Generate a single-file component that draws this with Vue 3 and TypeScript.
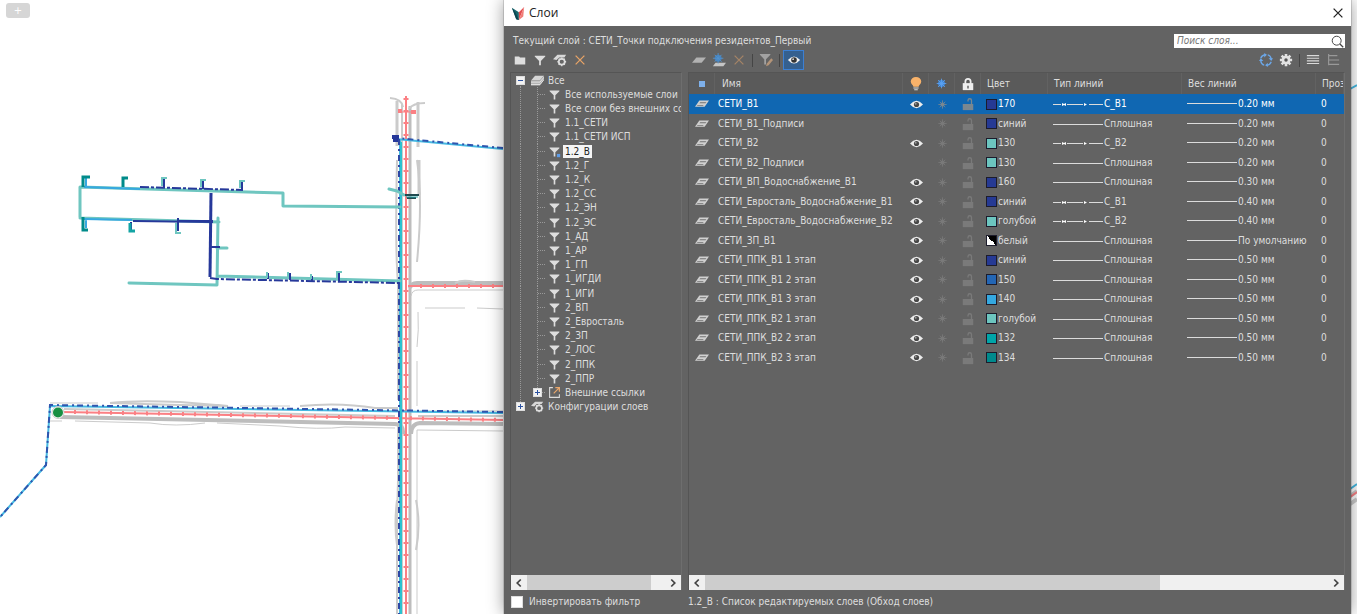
<script setup lang="ts">
import { computed, ref } from 'vue'

interface TreeNode {
  label: string
  level: 0 | 1
  icon: string
  box?: 'plus' | 'minus'
}

interface Layer {
  name: string
  visible: boolean
  color: string
  colorName: string
  lineType: string
  weight: string
}

const filters = [
  'Все используемые слои', 'Все слои без внешних ссылок', '1.1_СЕТИ', '1.1_СЕТИ ИСП', '1.2_В', '1.2_Г',
  '1.2_К', '1.2_СС', '1.2_ЭН', '1.2_ЭС', '1_АД', '1_АР', '1_ГП', '1_ИГДИ', '1_ИГИ', '2_ВП',
  '2_Евросталь', '2_ЗП', '2_ЛОС', '2_ППК', '2_ППР',
]

const nodes: TreeNode[] = [
  { label: 'Все', level: 0, icon: 'stack', box: 'minus' },
  ...filters.map((label): TreeNode => ({ label, level: 1, icon: label === '1.2_В' ? 'funnel-dot' : 'funnel' })),
  { label: 'Внешние ссылки', level: 1, icon: 'external', box: 'plus' },
  { label: 'Конфигурации слоев', level: 0, icon: 'config', box: 'plus' },
]

const layer = (name: string, visible: boolean, color: string, colorName: string, lineType: string, weight: string): Layer =>
  ({ name, visible, color, colorName, lineType, weight })

const layers: Layer[] = [
  layer('СЕТИ_В1', true, '#263a94', '170', 'С_В1', '0.20 мм'),
  layer('СЕТИ_В1_Подписи', false, '#263a94', 'синий', 'Сплошная', '0.20 мм'),
  layer('СЕТИ_В2', true, '#6cc5bf', '130', 'С_В2', '0.20 мм'),
  layer('СЕТИ_В2_Подписи', false, '#6cc5bf', '130', 'Сплошная', '0.20 мм'),
  layer('СЕТИ_ВП_Водоснабжение_В1', true, '#263a94', '160', 'Сплошная', '0.30 мм'),
  layer('СЕТИ_Евросталь_Водоснабжение_В1', true, '#263a94', 'синий', 'С_В1', '0.40 мм'),
  layer('СЕТИ_Евросталь_Водоснабжение_В2', true, '#6cc5bf', 'голубой', 'С_В2', '0.40 мм'),
  layer('СЕТИ_ЗП_В1', true, 'bw', 'белый', 'Сплошная', 'По умолчанию'),
  layer('СЕТИ_ППК_В1 1 этап', true, '#263a94', 'синий', 'Сплошная', '0.50 мм'),
  layer('СЕТИ_ППК_В1 2 этап', true, '#2366b4', '150', 'Сплошная', '0.50 мм'),
  layer('СЕТИ_ППК_В1 3 этап', true, '#34a8e0', '140', 'Сплошная', '0.50 мм'),
  layer('СЕТИ_ППК_В2 1 этап', true, '#6cc5bf', 'голубой', 'Сплошная', '0.50 мм'),
  layer('СЕТИ_ППК_В2 2 этап', true, '#00a5a8', '132', 'Сплошная', '0.50 мм'),
  layer('СЕТИ_ППК_В2 3 этап', true, '#008a8c', '134', 'Сплошная', '0.50 мм'),
]

const activeFilter = ref('1.2_В')
const activeLayer = ref('СЕТИ_В1')
const query = ref('')
const invert = ref(false)
const status = computed(() => `${activeFilter.value} : Список редактируемых слоев (Обход слоев)`)
</script>

<template>
  <main class="desktop">
    <svg class="symbols" aria-hidden="true">
      <symbol id="folder" viewBox="0 0 16 16"><path d="M2 4h5l1 1h6v8H2z" fill="#dedede" /></symbol>
      <symbol id="funnel" viewBox="0 0 16 16"><path d="M2 3h12v1L9 9v5H7V9L2 4z" fill="#dedede" /></symbol>
      <symbol id="funnel-dot" viewBox="0 0 16 16"><path d="M2 3h12v1L9 9v5H7V9L2 4z" fill="#dedede" /><path d="M11 11h4v4h-4z" fill="#5d9be6" /></symbol>
      <symbol id="config" viewBox="0 0 16 16">
        <path d="M0 7l5-5h10l-2 3H7L4 8z" fill="#d8d8d8" />
        <circle cx="10" cy="10" r="3.400" fill="none" stroke="#dedede" stroke-width="2" />
        <path d="M10 5v2M10 13v2M5 10h2M13 10h2M6.500 6.500l1 1M12.500 12.500l1 1M6.500 13.500l1-1M12.500 7.500l1-1" stroke="#dedede" stroke-width="1.500" />
        <circle cx="10" cy="10" r="1.500" fill="#686868" />
      </symbol>
      <symbol id="cross" viewBox="0 0 16 16"><path d="M3 3l10 10M13 3L3 13" stroke="currentColor" stroke-width="1.500" fill="none" /></symbol>
      <symbol id="sheet" viewBox="0 0 16 16"><path d="M5 5h11l-5 6H0z" fill="#b2b2b2" /></symbol>
      <symbol id="sheet-snow" viewBox="0 0 16 16">
        <path d="M4 11h12l-3 4H1z" fill="#c5c5c5" />
        <circle cx="7" cy="6" r="4" fill="#4181c0" />
        <path d="M7 0v12M1 6h12M3 2l8 8M11 2l-8 8" stroke="#5592cc" stroke-width="1" />
      </symbol>
      <symbol id="funnel-pen" viewBox="0 0 16 16"><path d="M1 1h12v1L8 7v6H6V7L1 2z" fill="#a2a2a2" /><path d="M8 15l1-3 5-6 2 2-5 6z" fill="#b49478" /></symbol>
      <symbol id="eye" viewBox="0 0 16 16">
        <path d="M0 8Q8-1 16 8Q8 17 0 8z" fill="#ececec" />
        <circle cx="8" cy="8" r="3.200" fill="#484848" /><circle cx="7" cy="7" r="1.200" fill="#999" />
      </symbol>
      <symbol id="eye-big" viewBox="0 0 16 16">
        <path d="M1 8Q8 0 15 8Q8 16 1 8z" fill="#f2f2f2" />
        <circle cx="8" cy="8" r="3.200" fill="#343434" /><circle cx="7" cy="7" r="1" fill="#ddd" />
      </symbol>
      <symbol id="refresh" viewBox="0 0 16 16">
        <path d="M14 10A6 6 0 0 1 9 14M6 14A6 6 0 0 1 2 9M2 6A6 6 0 0 1 7 2M10 2A6 6 0 0 1 14 7" fill="none" stroke="#6ca7e8" stroke-width="1.500" />
        <path d="M11 6h5l-2 3zM0 9h5L2 6zM6 0l3 2-3 3zM10 11v5l-3-2z" fill="#6ca7e8" />
      </symbol>
      <symbol id="gear" viewBox="0 0 16 16">
        <path d="M8 1v14M1 8h14M3 3l10 10M13 3L3 13" stroke="#e2e2e2" stroke-width="3" />
        <circle cx="8" cy="8" r="5" fill="#e2e2e2" /><circle cx="8" cy="8" r="2" fill="#555" />
      </symbol>
      <symbol id="rows" viewBox="0 0 16 16"><path d="M1 3h14M1 6h14M1 9h14M1 12h14" stroke="#dadada" stroke-width="1.300" /></symbol>
      <symbol id="outline" viewBox="0 0 16 16"><path d="M3 1v13M3 3h10M3 8h12M3 13h12" stroke="#999" stroke-width="1.300" fill="none" /></symbol>
      <symbol id="stack" viewBox="0 0 16 16">
        <path d="M5 2h11l-5 6H0z" fill="#d6d6d6" /><path d="M0 8h11l5-6v5l-5 7H0z" fill="#b4b4b4" /><path d="M0 10h11l5-6M0 13h11l5-6" fill="none" stroke="#ececec" />
      </symbol>
      <symbol id="external" viewBox="0 0 16 16">
        <path d="M6 2H2v12h12v-4M2 2v12" fill="none" stroke="#dedede" stroke-width="1.300" />
        <path d="M7 9l7-7M9 2h5v5" fill="none" stroke="#eaa76b" stroke-width="1.500" />
      </symbol>
      <symbol id="layer" viewBox="0 0 16 16"><path d="M5 4h11l-5 7H0z" fill="#d0d0d0" /><path d="M6 6h7l-1 1H5zM3 9h7l-1 1H2z" fill="#727272" /></symbol>
      <symbol id="snow" viewBox="0 0 16 16"><circle cx="8" cy="8" r="3" fill="currentColor" /><path d="M8 2v12M2 8h12M4 4l8 8M12 4l-8 8" stroke="currentColor" stroke-width="1.200" /></symbol>
      <symbol id="snow-head" viewBox="0 0 16 16"><circle cx="8" cy="8" r="5" fill="#3f88dc" /><path d="M8 1v14M1 8h14M3 3l10 10M13 3L3 13" stroke="#5ea3f0" stroke-width="1.200" /></symbol>
      <symbol id="lock" viewBox="0 0 16 16"><path d="M5 8V5a3 3 0 0 1 6 0v3" fill="none" stroke="#eee" stroke-width="2" /><path d="M2 7h12v8H2z" fill="#eee" /><path d="M7 10h2v3H7z" fill="#777" /></symbol>
      <symbol id="unlock" viewBox="0 0 16 16"><path d="M8 5V4a2 2 0 0 1 4 0v4" fill="none" stroke="currentColor" stroke-width="1.500" /><path d="M2 8h12v7H2z" fill="currentColor" /></symbol>
      <symbol id="bulb" viewBox="0 0 16 16"><path d="M5 11C5 9 2 8 2 5a6 5 0 0 1 12 0c0 3-3 4-3 6z" fill="#f8b26a" /><path d="M5 12h6v1H5zM6 14h4v1H6z" fill="#ddd" /></symbol>
      <symbol id="glass" viewBox="0 0 16 16"><circle cx="7" cy="7" r="5.500" fill="none" stroke="#444" stroke-width="1.200" /><path d="M11 11l4 4" stroke="#444" stroke-width="1.600" /></symbol>
      <symbol id="logo" viewBox="0 0 16 16"><path d="M1 2l8 5v9L6 15z" fill="#17666c" /><path d="M1 2l4 5 4 9-3-1z" fill="#0a4550" /><path d="M15 1L9 7v9z" fill="#e34e52" /><path d="M15 1l-1 11-5 4z" fill="#f07d77" /></symbol>
      <symbol id="left" viewBox="0 0 16 16"><path d="M10 4L6 8l4 4" fill="none" stroke="#444" stroke-width="2" /></symbol>
      <symbol id="right" viewBox="0 0 16 16"><path d="M6 4l4 4-4 4" fill="none" stroke="#444" stroke-width="2" /></symbol>
    </svg>

    <svg class="map" viewBox="0 0 1357 614" preserveAspectRatio="xMinYMin slice" role="img" aria-label="План сетей водоснабжения">
      <g fill="none" stroke="#cbcbcb">
        <path d="M397 101V146M418 102V147M419 160V195" stroke-width="3" />
        <path d="M397 160Q395 250 398 283V400M398 425V480L397 520V614M417 160Q423 200 417 262" stroke-width="2" />
        <path d="M418 312Q419 330 417 347M417 361V406M417 430V614" stroke-width="1" />
        <path d="M402 104V614" stroke-width="2" />
        <path d="M410 106V614" stroke="#bdbdbd" stroke-width="3" />
        <path d="M390 98Q402 99 403 107M409 109Q413 103 425 103" stroke-width="2" />
        <path d="M416 500Q421 525 416 550M397 500Q394 525 397 545" stroke-width="2" />
        <path d="M410 288Q411 283 417 283H503" stroke="#bdbdbd" stroke-width="4" />
        <path d="M411 296Q412 290 418 290H503M425 308H465M477 308L503 309" stroke-width="1" />
        <path d="M50 403H98M240 406H290M420 411H503" stroke-width="1" />
        <path d="M110 403Q135 400 180 402L228 406Q170 405 110 403M300 406Q340 402 375 408H398" stroke-width="2" />
        <path d="M50 421H62M75 421L150 423Q175 427 205 423M217 423L280 426Q320 430 345 427L395 428M417 430L503 431" stroke-width="1" />
        <path d="M60 417L395 424Q404 424 403 434M411 434Q411 424 420 423L503 424" stroke="#bdbdbd" stroke-width="4" />
        <path d="M64 409L395 416M418 416H503" stroke-width="2" />
        <path d="M455 283Q462 279 475 282" stroke-width="2" />
        <path d="M1346 499L1357 491M1346 507L1357 499" stroke-width="4" />
      </g>
      <g fill="none" stroke="#fb8084">
        <path d="M406 96V614M408 286H503M62 412L503 420" stroke-width="2" />
        <path d="M406 98V614" stroke-width="5" stroke-dasharray="2 10" />
        <path d="M420 286H503M74 412L503 420" stroke-width="4" stroke-dasharray="2 10" />
        <path d="M398 111H402M411 112H416" stroke-width="4" />
        <path d="M398 112H416" stroke-width="1" />
        <path d="M1346 500L1357 492" stroke-width="2" />
      </g>
      <g fill="none" stroke-width="2">
        <path d="M503 149L396 139M400 139V614M503 413L50 406L46 465L0 517M1350 89L1357 85M1350 489L1357 484" stroke="#45b9e2" />
        <path d="M503 148L396 138M503 412L50 405L46 465L0 517" stroke="#2f55ae" stroke-dasharray="6 3 2 4" />
        <path d="M399 139V614" stroke="#2f49a4" stroke-dasharray="6 4 2 4" />
        <path d="M401 142V614" stroke="#2cc2d0" />
        <path d="M392 137H399M393 140H398" stroke="#26389a" stroke-width="4" />
      </g>
      <g fill="none" stroke="#6fc6c0" stroke-width="3" stroke-linejoin="round" stroke-linecap="round">
        <path d="M80 217V187L283 193V206L400 207M80 218L219 222M218 218L217 285L129 283M217 276L400 281" />
        <path d="M389 189L397 191L404 195M227 248H217" />
      </g>
      <path d="M84 187L140 189M84 219L132 220M86 178V186M86 220V228" fill="none" stroke="#36a8e0" stroke-width="2" />
      <g fill="none" stroke="#26389a">
        <path d="M211 193L210 277" stroke-width="3" />
        <path d="M133 221L213 222M178 221H213" stroke-width="2" />
        <path d="M140 187L243 190M210 278L217 279L400 283" stroke-width="2" stroke-dasharray="9 2 3 2" />
        <path d="M164 188V179M203 189V180M242 190V181M178 218V231M131 222V230M211 247H220" stroke-width="2" />
        <path d="M268 279V273M290 280V273M312 281V276M339 281V273" stroke-width="2" />
      </g>
      <g fill="none" stroke="#008b8a" stroke-width="3">
        <path d="M83 187V177H90M83 217V230H88M123 187V178H128" />
        <path d="M130 223V231H135" stroke="#13a4a4" />
      </g>
      <path d="M162 186V178H167M201 187V180H206M240 188V181H245M176 223V233H181M267 278V272M288 278V272M311 279V274M337 279V272H342" fill="none" stroke="#6fc6c0" stroke-width="2" />
      <path d="M405 195H419M407 198H416" stroke="#214a50" stroke-width="2" />
      <path d="M406 197H418" stroke="#28a5a8" stroke-width="1" />
      <circle cx="58" cy="412.500" r="6" fill="#fff" stroke="#c9c9c9" />
      <circle cx="58" cy="412.500" r="5" fill="#178f43" />
    </svg>
    <button class="add-tab" aria-label="Новая вкладка">+</button>

    <section class="dialog" role="dialog" aria-labelledby="dialog-title">
      <header class="titlebar">
        <svg class="logo"><use href="#logo" /></svg>
        <h1 id="dialog-title">Слои</h1>
        <button class="close" aria-label="Закрыть"><svg><use href="#cross" /></svg></button>
      </header>

      <div class="body">
        <div class="current">
          <span>Текущий слой : СЕТИ_Точки подключения резидентов_Первый</span>
          <label class="search">
            <input v-model="query" type="text" placeholder="Поиск слоя..." aria-label="Поиск слоя" />
            <svg><use href="#glass" /></svg>
          </label>
        </div>

        <div class="toolbar">
          <button aria-label="Новая папка"><svg><use href="#folder" /></svg></button>
          <button aria-label="Новый фильтр"><svg><use href="#funnel" /></svg></button>
          <button aria-label="Конфигурации"><svg><use href="#config" /></svg></button>
          <button class="orange" aria-label="Удалить фильтр"><svg><use href="#cross" /></svg></button>
        </div>

        <div class="toolbar layers-bar">
          <button aria-label="Новый слой"><svg><use href="#sheet" /></svg></button>
          <button aria-label="Новый замороженный слой"><svg><use href="#sheet-snow" /></svg></button>
          <button class="orange dim" aria-label="Удалить слой"><svg><use href="#cross" /></svg></button>
          <i class="sep"></i>
          <button aria-label="Изменить фильтр"><svg><use href="#funnel-pen" /></svg></button>
          <i class="sep"></i>
          <button class="pressed" aria-label="Обход слоев" aria-pressed="true"><svg><use href="#eye-big" /></svg></button>
          <span class="spring"></span>
          <button aria-label="Обновить"><svg><use href="#refresh" /></svg></button>
          <button aria-label="Настройки"><svg><use href="#gear" /></svg></button>
          <i class="sep"></i>
          <button aria-label="Список"><svg><use href="#rows" /></svg></button>
          <button aria-label="Дерево"><svg><use href="#outline" /></svg></button>
        </div>

        <div class="panel">
          <ul class="tree">
            <li v-for="(node, i) in nodes" :key="node.label">
              <span v-if="node.level === 1" class="cell line"></span>
              <span class="cell" :class="{ line: node.level === 1, last: node.level === 1 && node.box, branch: node.level === 1, down: i === 0, up: i === nodes.length - 1 }">
                <button v-if="node.box" class="box" :class="node.box" :aria-label="'Развернуть ' + node.label"></button>
              </span>
              <span class="cell icon"><svg><use :href="'#' + node.icon" /></svg></span>
              <button class="label" :class="{ active: node.label === activeFilter }" @click="activeFilter = node.label">{{ node.label }}</button>
            </li>
          </ul>
          <div class="scrollbar">
            <button aria-label="Влево"><svg><use href="#left" /></svg></button>
            <div class="track"><div class="thumb tree-thumb"></div></div>
            <button aria-label="Вправо"><svg><use href="#right" /></svg></button>
          </div>
        </div>

        <div class="panel">
          <div class="grid">
            <table>
              <colgroup>
                <col class="c-icon" /><col /><col class="c-icon" /><col class="c-icon" /><col class="c-icon" />
                <col class="c-color" /><col class="c-line" /><col class="c-line" /><col class="c-last" />
              </colgroup>
              <thead>
                <tr>
                  <th class="mid" aria-label="Статус"><i class="status"></i></th>
                  <th class="name">Имя</th>
                  <th class="mid" aria-label="Вкл"><svg><use href="#bulb" /></svg></th>
                  <th class="mid" aria-label="Заморозить"><svg class="flake"><use href="#snow-head" /></svg></th>
                  <th class="mid" aria-label="Блокировать"><svg><use href="#lock" /></svg></th>
                  <th>Цвет</th>
                  <th>Тип линий</th>
                  <th>Вес линий</th>
                  <th>Прозрачность</th>
                </tr>
              </thead>
              <tbody>
                <tr v-for="item in layers" :key="item.name" :class="{ selected: item.name === activeLayer }" @click="activeLayer = item.name">
                  <td class="mid"><svg><use href="#layer" /></svg></td>
                  <td>{{ item.name }}</td>
                  <td class="mid"><svg v-if="item.visible" class="eye"><use href="#eye" /></svg></td>
                  <td class="mid faint"><svg class="flake"><use href="#snow" /></svg></td>
                  <td class="mid faint"><svg><use href="#unlock" /></svg></td>
                  <td>
                    <div class="sample">
                      <i v-if="item.color === 'bw'" class="swatch bw"></i>
                      <i v-else class="swatch" :style="{ background: item.color }"></i>
                      <span>{{ item.colorName }}</span>
                    </div>
                  </td>
                  <td>
                    <div class="sample">
                      <svg class="stroke" viewBox="0 0 50 12">
                        <path v-if="item.lineType === 'Сплошная'" d="M0 6.500H50" stroke="#dcdcdc" />
                        <template v-else>
                          <path d="M0 6.500H8M14 6.500H30M36 6.500H50" stroke="#dcdcdc" />
                          <path d="M9 5l2 1 2-1v3l-2-1-2 1zM31 5l3 1.500-3 1.500z" fill="#fff" />
                        </template>
                      </svg>
                      <span>{{ item.lineType }}</span>
                    </div>
                  </td>
                  <td>
                    <div class="sample">
                      <svg class="stroke" viewBox="0 0 50 12"><path d="M0 5.500H50" stroke="#dcdcdc" /></svg>
                      <span>{{ item.weight }}</span>
                    </div>
                  </td>
                  <td>0</td>
                </tr>
              </tbody>
            </table>
          </div>
          <div class="scrollbar">
            <button aria-label="Влево"><svg><use href="#left" /></svg></button>
            <div class="track"><div class="thumb grid-thumb"></div></div>
            <button aria-label="Вправо"><svg><use href="#right" /></svg></button>
          </div>
        </div>

        <label class="invert"><input v-model="invert" type="checkbox" />Инвертировать фильтр</label>
        <div class="summary">{{ status }}</div>
      </div>
    </section>
  </main>
</template>

<style>
html, body, #app { height: 100%; }
body { margin: 0; overflow: hidden; }
</style>

<style scoped>
* { box-sizing: border-box; }
.desktop { position: relative; height: 100vh; overflow: hidden; background: #fff; font: 10px/12px "DejaVu Sans Condensed", "DejaVu Sans", sans-serif; color: #dedede; }
button { padding: 0; border: 0; background: none; color: inherit; font: inherit; }
svg { display: block; width: 14px; height: 14px; }
.symbols { position: absolute; width: 0; height: 0; }
.map { position: absolute; inset: 0; width: 100%; height: 100%; }
.add-tab { position: absolute; left: 6px; top: 3px; width: 24px; height: 15px; border-radius: 3px; background: #d6d6d6; color: #fff; font: 10px/15px "DejaVu Sans", sans-serif; }

.dialog { position: absolute; left: 504px; right: 6px; top: 0; bottom: 0; display: flex; flex-direction: column; background: #636363; box-shadow: 0 0 1px #333, 0 0 16px rgba(0, 0, 0, 0.4); }
.titlebar { display: flex; align-items: center; height: 26px; padding: 0 6px 0 7px; background: #fff; color: #222; }
.titlebar h1 { flex: 1; margin: 0 0 0 4px; font: 12px/16px "Open Sans", "Noto Sans", sans-serif; }

.body { flex: 1; min-height: 0; display: grid; grid-template-columns: 172px minmax(0, 1fr); grid-template-rows: 14px 24px minmax(0, 1fr) 24px; column-gap: 6px; padding: 8px 6px 0; }
.current { grid-column: 1 / -1; display: flex; justify-content: space-between; padding-left: 3px; line-height: 14px; white-space: nowrap; }
.search { display: flex; align-items: center; width: 171px; height: 14px; padding: 0 1px 0 3px; background: #fff; }
.search input { flex: 1; min-width: 0; padding: 0; border: 0; outline: 0; background: none; color: #333; font: italic 10px/14px "DejaVu Sans Condensed", sans-serif; }
.search input::placeholder { color: #777; opacity: 1; }
.search svg { width: 13px; height: 13px; }

.toolbar { display: flex; align-items: center; height: 20px; margin-top: 2px; }
.toolbar button { display: grid; place-items: center; width: 20px; height: 20px; }
.layers-bar { padding: 0 2px 0 1px; }
.orange { color: #e9a467; }
.dim { color: #a58467; }
.sep { width: 1px; height: 13px; margin: 0 3px; background: #454545; }
.toolbar .pressed { width: 21px; background: #35608f; box-shadow: inset 0 0 0 1px #3c80d4; }
.spring { flex: 1; }

.panel { display: flex; flex-direction: column; min-width: 0; border: 1px solid #555; border-right-color: #6e6e6e; border-bottom: 0; }
.tree { flex: 1; min-height: 0; margin: 0; padding: 0 0 0 1px; overflow: hidden; list-style: none; }
.tree li { display: flex; align-items: center; height: 14px; }
.tree li:nth-child(5n) { height: 15px; }
.cell { flex: none; display: grid; place-items: center; width: 17px; height: 100%; }
.cell svg { width: 13px; height: 13px; }
.line, .down, .up { background: repeating-linear-gradient(#999 0 1px, transparent 1px 2px) 8px 0 / 1px 100% no-repeat; }
.down { background-position: 8px 100%; background-size: 1px 50%; }
.up, .last { background-size: 1px 50%; }
.branch { background: repeating-linear-gradient(#999 0 1px, transparent 1px 2px) 8px 0 / 1px 100% no-repeat, repeating-linear-gradient(90deg, #999 0 1px, transparent 1px 2px) 9px 50% / 8px 1px no-repeat; }
.branch.last { background-size: 1px 50%, 8px 1px; }
.box { width: 9px; height: 9px; border: 1px solid #ddd; background: linear-gradient(#2c52a0, #2c52a0) center / 5px 1px no-repeat, #f2f2f2; }
.box.plus { background: linear-gradient(#2c52a0, #2c52a0) center / 5px 1px no-repeat, linear-gradient(#2c52a0, #2c52a0) center / 1px 5px no-repeat, #f2f2f2; }
.label { height: 13px; padding: 0 2px; line-height: 13px; white-space: nowrap; text-align: left; }
.label.active { background: #f5f5f5; color: #222; }

.scrollbar { display: flex; height: 15px; background: #f0f0f0; }
.scrollbar button { display: grid; place-items: center; width: 16px; }
.track { flex: 1; }
.thumb { height: 100%; background: #cdcdcd; }
.tree-thumb { width: 90%; }
.grid-thumb { width: 73%; }

.grid { flex: 1; min-height: 0; overflow: hidden; }
table { width: 100%; table-layout: fixed; border-collapse: separate; border-spacing: 0; }
.c-icon { width: 26px; }
.c-color { width: 67px; }
.c-line { width: 134px; }
.c-last { width: 28px; }
th, td { padding: 0 0 0 5px; overflow: hidden; font-weight: normal; text-align: left; white-space: nowrap; }
th { height: 21px; padding-left: 6px; background: #5a5a5a; border-right: 1px solid #626262; }
th.name { padding-left: 7px; }
td { height: 19px; }
td:nth-child(2) { padding-left: 3px; }
tbody tr:nth-child(odd) td { height: 20px; }
th.mid, td.mid { padding: 0; }
.mid svg { margin: 0 auto; }
.status { display: block; width: 6px; height: 6px; margin: 0 auto; background: #7eb0ea; }
.faint { color: #7a7a7a; }
.mid .flake { width: 11px; height: 11px; }
.mid .eye { width: 13px; height: 13px; }
.selected { background: #1067b2; color: #fff; }
.selected .faint { color: #7a8790; }
.sample { display: flex; align-items: center; }
.sample .stroke { width: 50px; height: 12px; margin-right: 1px; fill: none; }
.swatch { width: 11px; height: 11px; margin-right: 1px; border: 1px solid #1c1c2c; }
.swatch.bw { background: linear-gradient(45deg, #fff 0 50%, #000 50%); }

.invert { display: flex; align-items: center; gap: 6px; white-space: nowrap; }
.invert input { appearance: none; width: 12px; height: 12px; margin: 0 0 0 1px; background: #fff; border: 1px solid #ddd; }
.invert input:checked { background: #1067b2; }
.summary { display: flex; align-items: center; white-space: nowrap; }
</style>
